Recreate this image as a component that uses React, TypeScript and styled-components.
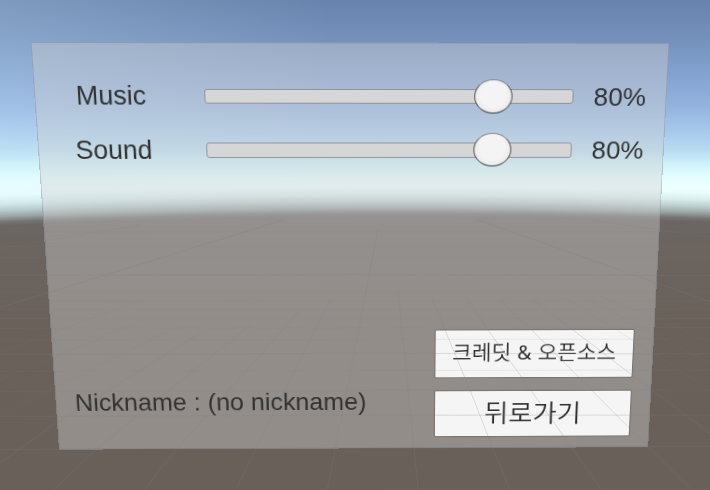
import React from 'react';
import styled, { createGlobalStyle } from 'styled-components';

const PANEL_W = 640;
const PANEL_H = 440;

type Point = [number, number];

/* Projects a w x h box onto four corners (tl, tr, br, bl). */
function project(w: number, h: number, corners: Point[]): string {
  const [[x0, y0], [x1, y1], [x2, y2], [x3, y3]] = corners;
  const dx1 = x1 - x2;
  const dx2 = x3 - x2;
  const dy1 = y1 - y2;
  const dy2 = y3 - y2;
  const sx = x0 - x1 + x2 - x3;
  const sy = y0 - y1 + y2 - y3;
  const det = dx1 * dy2 - dx2 * dy1;
  const g = (sx * dy2 - dx2 * sy) / det;
  const k = (dx1 * sy - sx * dy1) / det;
  const m = [
    (x1 - x0 + g * x1) / w, (y1 - y0 + g * y1) / w, 0, g / w,
    (x3 - x0 + k * x3) / h, (y3 - y0 + k * y3) / h, 0, k / h,
    0, 0, 1, 0,
    x0, y0, 0, 1,
  ];
  return `matrix3d(${m.map((n) => n.toFixed(9)).join(',')})`;
}

const tilt = project(PANEL_W, PANEL_H, [[30.6, 42], [669.5, 42.8], [648.2, 447.2], [59, 449.7]]);

const GlobalStyle = createGlobalStyle`
  html, body { margin: 0; padding: 0; overflow: hidden; }
  * { box-sizing: border-box; }
`;

const Scene = styled.main`
  position: relative;
  width: 710px;
  height: 490px;
  overflow: hidden;
  font-family: 'Liberation Sans', Arial, 'Noto Sans CJK KR', sans-serif;
  color: #323232;
  background:
    radial-gradient(
      circle 9400px at 400px 9216px,
      #69605a 0, #69605a 8800px, #6a615b 8900px, #6b645f 8975px, #6b6664 8999px,
      rgba(107, 104, 103, 0.9) 9003px, rgba(110, 114, 113, 0.62) 9008px,
      rgba(120, 128, 128, 0.38) 9014px,
      rgba(140, 155, 155, 0.16) 9021px, rgba(160, 180, 180, 0) 9029px
    ),
    linear-gradient(to right, rgba(208, 240, 255, 0.21), rgba(208, 240, 255, 0) 330px),
    linear-gradient(
      to bottom,
      #6883ac 0, #7592bd 42px, #87a5d2 80px, #94b4de 107px, #a8caec 133px,
      #b8dbf2 150px, #d0f3fb 165px, #e3fdff 177px, #eeffff 187px, #e6fcfc 200px, #d8eeee 230px
    );
`;

const Panel = styled.section`
  width: ${PANEL_W}px;
  height: ${PANEL_H}px;
  padding: 26.7px 22px 13.8px 9px;
  display: flex;
  flex-direction: column;
  justify-content: space-between;
  background: rgba(208, 208, 208, 0.4);
  box-shadow: inset 0 0 0 1px rgba(70, 80, 95, 0.22);
  transform: ${tilt};
  transform-origin: 0 0;
`;

const Settings = styled.div`
  display: flex;
  flex-direction: column;
`;

const SettingRow = styled.div`
  display: grid;
  grid-template-columns: 135px 373.6px 54px;
  column-gap: 27px;
  height: 55.5px;
  align-items: center;
  font-size: 27px;
  line-height: 32px;
`;

const Label = styled.span`
  padding-left: 1px;
  text-align: center;
`;

const Value = styled.span`
  margin-left: -6px;
  padding-top: 1px;
  font-size: 26.6px;
  white-space: nowrap;
`;

const Track = styled.div`
  display: flex;
  align-items: center;
  height: 15.6px;
  border-radius: 3px;
  background: #d6d6d6;
  border: 1px solid #8d939b;
`;

const Fill = styled.div`
  display: flex;
  justify-content: flex-end;
  align-items: center;
  height: 100%;
`;

const Knob = styled.div`
  flex: none;
  width: 38.5px;
  height: 35px;
  margin-right: -19px;
  border-radius: 50%;
  border: 1.8px solid #555555;
  border-top-color: #8a8a8a;
  border-bottom-color: #3c3c3c;
  background: radial-gradient(ellipse at 50% 45%, #f4f4f4 50%, #e6e6e6 80%, #cccccc 100%);
`;

const Footer = styled.footer`
  display: flex;
  justify-content: space-between;
  align-items: flex-end;
  padding-left: 11.5px;
`;

const Nickname = styled.p`
  margin: 0 0 24.4px;
  font-size: 26.9px;
  line-height: 32px;
  white-space: pre;
`;

const Actions = styled.div`
  display: flex;
  flex-direction: column;
  gap: 16px;
`;

const ActionButton = styled.button<{ $size: number; $wordGap?: number }>`
  width: 211px;
  height: 52.4px;
  padding: 0 0 3.5px;
  border: 0;
  border-radius: 1px;
  background: #f5f5f5;
  box-shadow: 0 0 1px 0.5px rgba(70, 70, 70, 0.4);
  color: #2c2c2c;
  font-family: 'Noto Sans CJK KR', sans-serif;
  font-weight: 350;
  font-size: ${({ $size }) => $size}px;
  word-spacing: ${({ $wordGap = 0 }) => $wordGap}px;
  line-height: 1;
  white-space: nowrap;
`;

const Ampersand = styled.span`
  font-family: 'Noto Sans', sans-serif;
  font-weight: 400;
  font-size: 21px;
`;

const FloorGrid = styled.svg`
  position: absolute;
  inset: 0;
  pointer-events: none;
`;

const strongLines = [
  'M0 275.2L355 274.6L710 275.5',
  'M0 354.8L355 353.3L710 354',
  'M0 449.3L355 448.2L710 446.6',
  'M0 416.4L355 415.3L710 415',
  'M378 229L355 349L335 449L327.3 490',
  'M0 307.5L83 282L283 220',
  'M710 301.7L656.7 283L478 220',
  'M330 300L255.7 449L235.7 490',
  'M300 310L176.7 449L144 490',
  'M250 325L96.7 449L53.3 490',
  'M200 333L53 425L0 463',
  'M398 290L414 448L418.3 490',
  'M431.7 296.7L445 330L470 390L492.7 448L510 490',
  'M466 297L488 330L572 448L601.7 490',
  'M500 300L531.7 330L648 446.7L692 490',
  'M533 300L573 330L651.7 390L710 433',
];

const faintLines = [
  'M0 246.7H710', 'M0 232H710', 'M0 258H710', 'M0 292H710', 'M0 301H710', 'M0 309.5H710',
  'M0 318.5H710', 'M0 328.3L710 327.5', 'M0 340L710 339', 'M0 371.7L355 370.5L710 370',
  'M0 391.3L355 390.5L710 390', 'M390 489.3H710',
  'M0 415L53 388L170 330', 'M0 380L52 358L150 317', 'M0 353L52 333L140 300',
  'M0 249L43 241.5L140 225', 'M710 237L660 230L590 220',
  'M710 390L616.7 330L565 298', 'M710 363L652 333L590 300', 'M710 341L653 317L600 296',
];

function FloorLines() {
  return (
    <FloorGrid width="710" height="490" viewBox="0 0 710 490" fill="none">
      <g stroke="#7c8383" strokeWidth="0.9">
        <path d={strongLines.join('')} strokeOpacity="0.27" />
        <path d={faintLines.join('')} strokeOpacity="0.14" />
      </g>
    </FloorGrid>
  );
}

function SliderSetting({ name, value }: { name: string; value: number }) {
  return (
    <SettingRow>
      <Label>{name}</Label>
      <Track role="slider" aria-label={name} aria-valuenow={value}>
        <Fill style={{ width: `${value * 0.981}%` }}>
          <Knob />
        </Fill>
      </Track>
      <Value>{value}%</Value>
    </SettingRow>
  );
}

export default function App() {
  return (
    <Scene>
      <GlobalStyle />
      <Panel>
        <Settings>
          <SliderSetting name="Music" value={80} />
          <SliderSetting name="Sound" value={80} />
        </Settings>
        <Footer>
          <Nickname>Nickname : (no nickname)</Nickname>
          <Actions>
            <ActionButton $size={22.8} $wordGap={1.5}>
              크레딧 <Ampersand>&amp;</Ampersand> 오픈소스
            </ActionButton>
            <ActionButton $size={28.5}>뒤로가기</ActionButton>
          </Actions>
        </Footer>
      </Panel>
      <FloorLines />
    </Scene>
  );
}
